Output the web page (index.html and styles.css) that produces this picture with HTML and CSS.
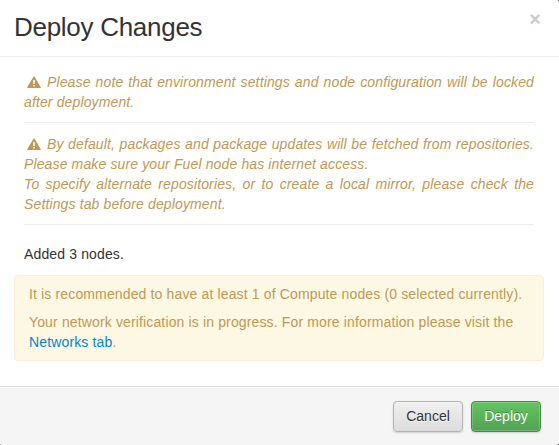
FILE: index.html
```html
<!DOCTYPE html>
<html lang="en">
<head>
<meta charset="utf-8">
<title>Deploy Changes</title>
<link rel="stylesheet" href="styles.css">
</head>
<body>
<div class="modal">
  <header class="modal-header">
    <h3>Deploy Changes</h3>
    <button class="close" type="button">×</button>
  </header>
  <main class="modal-body">
    <div class="notice">
      <p><svg class="icon" viewBox="0 0 14 12"><path fill-rule="evenodd" d="M6.6.4Q7 0 7.4.4L13.8 11.3Q14 12 13.3 12H.7Q0 12 .2 11.3ZM6 4.3 6.3 8H7.7L8 4.3ZM6.2 9V10.5H7.8V9Z"/></svg>Please note that environment settings and node configuration will be locked after deployment.</p>
      <hr>
      <p><svg class="icon" viewBox="0 0 14 12"><path fill-rule="evenodd" d="M6.6.4Q7 0 7.4.4L13.8 11.3Q14 12 13.3 12H.7Q0 12 .2 11.3ZM6 4.3 6.3 8H7.7L8 4.3ZM6.2 9V10.5H7.8V9Z"/></svg>By default, packages and package updates will be fetched from repositories. Please make sure your Fuel node has internet access.<br>To specify alternate repositories, or to create a local mirror, please check the Settings tab before deployment.</p>
      <hr>
    </div>
    <div class="summary">Added 3 nodes.</div>
    <div class="alert">
      <p>It is recommended to have at least 1 of Compute nodes (0 selected currently).</p>
      <p>Your network verification is in progress. For more information please visit the <a href="#">Networks tab</a>.</p>
    </div>
  </main>
  <footer class="modal-footer">
    <button class="btn" type="button">Cancel</button>
    <button class="btn btn-success" type="button">Deploy</button>
  </footer>
</div>
</body>
</html>
```
FILE: styles.css
```css
* { box-sizing: border-box; }

body {
  margin: 0;
  background: #333;
  color: #333;
  font: 14px/20px "Liberation Sans", Arial, sans-serif;
  letter-spacing: 0.14px;
}

.modal {
  display: flex;
  flex-direction: column;
  height: 445px;
  background: #fff;
  border-radius: 0 2px 3px 2px;
  overflow: hidden;
}

.modal-header {
  display: flex;
  justify-content: space-between;
  align-items: flex-start;
  height: 57px;
  padding: 9px 18px 0 14px;
  border-bottom: 1px solid #eee;
}

h3 {
  margin: 0;
  font-size: 26px;
  font-weight: normal;
  line-height: 36px;
  letter-spacing: -0.28px;
}

.close {
  padding: 0;
  border: 0;
  background: none;
  color: #ccc;
  font: bold 20px/20px "Liberation Sans", Arial, sans-serif;
}

.modal-body {
  flex: 1;
  padding: 15px 15px 0 14px;
}

.notice {
  padding: 0 10px;
  color: #c09853;
  font-style: italic;
  text-align: justify;
  letter-spacing: 0.13px;
}

p { margin: 0; }

hr {
  height: 1px;
  margin: 10px 0 11px;
  border: 0;
  background: #eee;
}

.icon {
  width: 14px;
  height: 12px;
  margin: 0 6px 0 3px;
  vertical-align: -1px;
  fill: #c09853;
}

.summary {
  padding: 8px 10px 11px;
}

.alert {
  padding: 8px 14px;
  border: 1px solid #fbeed5;
  border-radius: 4px;
  background: #fcf8e3;
  color: #c09853;
}

.alert p + p { margin-top: 8px; }

.alert a {
  color: #08c;
  text-decoration: none;
}

.modal-footer {
  display: flex;
  justify-content: flex-end;
  align-items: flex-start;
  gap: 8px;
  height: 59px;
  padding: 14px 18px 0;
  border-top: 1px solid #ddd;
  background: #f5f5f5;
  box-shadow: inset 0 1px 0 #fff;
}

.btn {
  width: 70px;
  height: 31px;
  padding: 0 0 2px;
  border: 1px solid #b3b3b3;
  border-radius: 4px;
  background: linear-gradient(#f0f0f0, #dcdcdc);
  box-shadow: inset 0 1px 0 rgba(255, 255, 255, .3), 0 1px 2px rgba(0, 0, 0, .15);
  color: #333;
  font: inherit;
  text-shadow: 0 1px 1px rgba(255, 255, 255, .75);
}

.btn-success {
  border-color: #3f8f3f;
  background: linear-gradient(#62c462, #51a351);
  box-shadow: inset 0 0 0 1px rgba(255, 255, 255, .2), 0 1px 2px rgba(0, 0, 0, .15);
  color: #fff;
  text-shadow: 0 -1px 0 rgba(0, 0, 0, .25);
}
```
